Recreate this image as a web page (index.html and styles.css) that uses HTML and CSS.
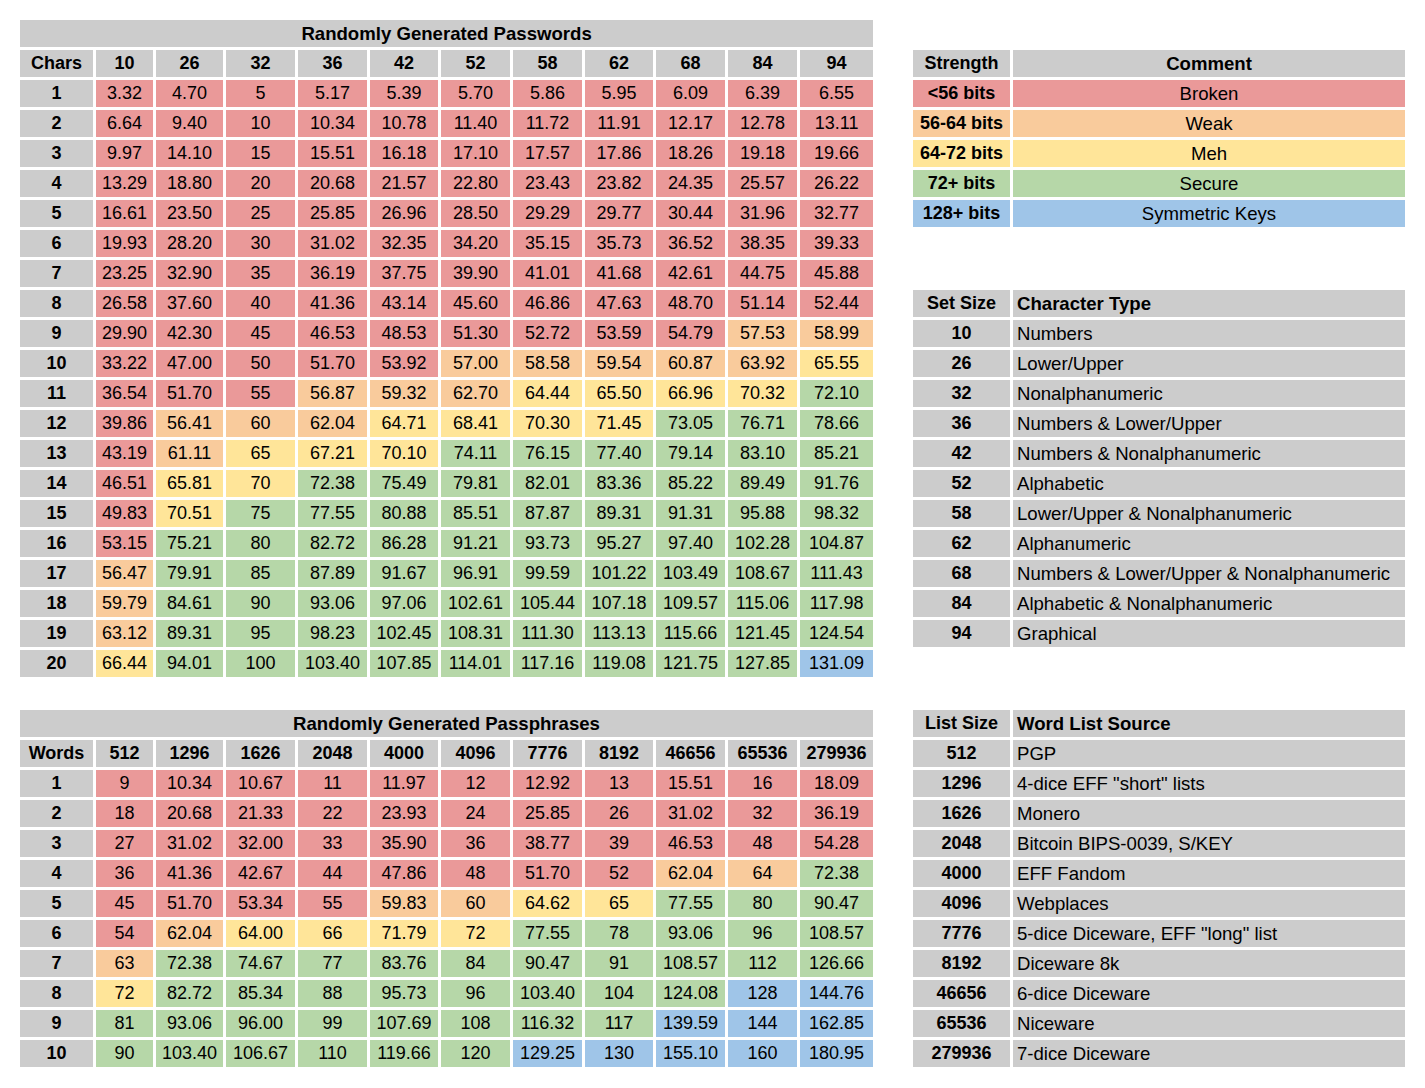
FILE: index.html
```html
<!DOCTYPE html>
<html lang="en">
<head>
<meta charset="utf-8">
<title>Password Entropy</title>
<link rel="stylesheet" href="styles.css">
</head>
<body>
<div class="page">
  <table class="sheet grid">
    <colgroup><col class="w73"><col class="w57"><col class="w67"><col class="w69"><col class="w69"><col class="w68"><col class="w69"><col class="w69"><col class="w68"><col class="w69"><col class="w69"><col class="w73"></colgroup>
    <tr><th class="title" colspan="12">Randomly Generated Passwords</th></tr>
    <tr><th>Chars</th><th>10</th><th>26</th><th>32</th><th>36</th><th>42</th><th>52</th><th>58</th><th>62</th><th>68</th><th>84</th><th>94</th></tr>
    <tr><th>1</th><td class="r">3.32</td><td class="r">4.70</td><td class="r">5</td><td class="r">5.17</td><td class="r">5.39</td><td class="r">5.70</td><td class="r">5.86</td><td class="r">5.95</td><td class="r">6.09</td><td class="r">6.39</td><td class="r">6.55</td></tr>
    <tr><th>2</th><td class="r">6.64</td><td class="r">9.40</td><td class="r">10</td><td class="r">10.34</td><td class="r">10.78</td><td class="r">11.40</td><td class="r">11.72</td><td class="r">11.91</td><td class="r">12.17</td><td class="r">12.78</td><td class="r">13.11</td></tr>
    <tr><th>3</th><td class="r">9.97</td><td class="r">14.10</td><td class="r">15</td><td class="r">15.51</td><td class="r">16.18</td><td class="r">17.10</td><td class="r">17.57</td><td class="r">17.86</td><td class="r">18.26</td><td class="r">19.18</td><td class="r">19.66</td></tr>
    <tr><th>4</th><td class="r">13.29</td><td class="r">18.80</td><td class="r">20</td><td class="r">20.68</td><td class="r">21.57</td><td class="r">22.80</td><td class="r">23.43</td><td class="r">23.82</td><td class="r">24.35</td><td class="r">25.57</td><td class="r">26.22</td></tr>
    <tr><th>5</th><td class="r">16.61</td><td class="r">23.50</td><td class="r">25</td><td class="r">25.85</td><td class="r">26.96</td><td class="r">28.50</td><td class="r">29.29</td><td class="r">29.77</td><td class="r">30.44</td><td class="r">31.96</td><td class="r">32.77</td></tr>
    <tr><th>6</th><td class="r">19.93</td><td class="r">28.20</td><td class="r">30</td><td class="r">31.02</td><td class="r">32.35</td><td class="r">34.20</td><td class="r">35.15</td><td class="r">35.73</td><td class="r">36.52</td><td class="r">38.35</td><td class="r">39.33</td></tr>
    <tr><th>7</th><td class="r">23.25</td><td class="r">32.90</td><td class="r">35</td><td class="r">36.19</td><td class="r">37.75</td><td class="r">39.90</td><td class="r">41.01</td><td class="r">41.68</td><td class="r">42.61</td><td class="r">44.75</td><td class="r">45.88</td></tr>
    <tr><th>8</th><td class="r">26.58</td><td class="r">37.60</td><td class="r">40</td><td class="r">41.36</td><td class="r">43.14</td><td class="r">45.60</td><td class="r">46.86</td><td class="r">47.63</td><td class="r">48.70</td><td class="r">51.14</td><td class="r">52.44</td></tr>
    <tr><th>9</th><td class="r">29.90</td><td class="r">42.30</td><td class="r">45</td><td class="r">46.53</td><td class="r">48.53</td><td class="r">51.30</td><td class="r">52.72</td><td class="r">53.59</td><td class="r">54.79</td><td class="o">57.53</td><td class="o">58.99</td></tr>
    <tr><th>10</th><td class="r">33.22</td><td class="r">47.00</td><td class="r">50</td><td class="r">51.70</td><td class="r">53.92</td><td class="o">57.00</td><td class="o">58.58</td><td class="o">59.54</td><td class="o">60.87</td><td class="o">63.92</td><td class="y">65.55</td></tr>
    <tr><th>11</th><td class="r">36.54</td><td class="r">51.70</td><td class="r">55</td><td class="o">56.87</td><td class="o">59.32</td><td class="o">62.70</td><td class="y">64.44</td><td class="y">65.50</td><td class="y">66.96</td><td class="y">70.32</td><td class="g">72.10</td></tr>
    <tr><th>12</th><td class="r">39.86</td><td class="o">56.41</td><td class="o">60</td><td class="o">62.04</td><td class="y">64.71</td><td class="y">68.41</td><td class="y">70.30</td><td class="y">71.45</td><td class="g">73.05</td><td class="g">76.71</td><td class="g">78.66</td></tr>
    <tr><th>13</th><td class="r">43.19</td><td class="o">61.11</td><td class="y">65</td><td class="y">67.21</td><td class="y">70.10</td><td class="g">74.11</td><td class="g">76.15</td><td class="g">77.40</td><td class="g">79.14</td><td class="g">83.10</td><td class="g">85.21</td></tr>
    <tr><th>14</th><td class="r">46.51</td><td class="y">65.81</td><td class="y">70</td><td class="g">72.38</td><td class="g">75.49</td><td class="g">79.81</td><td class="g">82.01</td><td class="g">83.36</td><td class="g">85.22</td><td class="g">89.49</td><td class="g">91.76</td></tr>
    <tr><th>15</th><td class="r">49.83</td><td class="y">70.51</td><td class="g">75</td><td class="g">77.55</td><td class="g">80.88</td><td class="g">85.51</td><td class="g">87.87</td><td class="g">89.31</td><td class="g">91.31</td><td class="g">95.88</td><td class="g">98.32</td></tr>
    <tr><th>16</th><td class="r">53.15</td><td class="g">75.21</td><td class="g">80</td><td class="g">82.72</td><td class="g">86.28</td><td class="g">91.21</td><td class="g">93.73</td><td class="g">95.27</td><td class="g">97.40</td><td class="g">102.28</td><td class="g">104.87</td></tr>
    <tr><th>17</th><td class="o">56.47</td><td class="g">79.91</td><td class="g">85</td><td class="g">87.89</td><td class="g">91.67</td><td class="g">96.91</td><td class="g">99.59</td><td class="g">101.22</td><td class="g">103.49</td><td class="g">108.67</td><td class="g">111.43</td></tr>
    <tr><th>18</th><td class="o">59.79</td><td class="g">84.61</td><td class="g">90</td><td class="g">93.06</td><td class="g">97.06</td><td class="g">102.61</td><td class="g">105.44</td><td class="g">107.18</td><td class="g">109.57</td><td class="g">115.06</td><td class="g">117.98</td></tr>
    <tr><th>19</th><td class="o">63.12</td><td class="g">89.31</td><td class="g">95</td><td class="g">98.23</td><td class="g">102.45</td><td class="g">108.31</td><td class="g">111.30</td><td class="g">113.13</td><td class="g">115.66</td><td class="g">121.45</td><td class="g">124.54</td></tr>
    <tr><th>20</th><td class="y">66.44</td><td class="g">94.01</td><td class="g">100</td><td class="g">103.40</td><td class="g">107.85</td><td class="g">114.01</td><td class="g">117.16</td><td class="g">119.08</td><td class="g">121.75</td><td class="g">127.85</td><td class="b">131.09</td></tr>
  </table>

  <div class="side">
    <table class="sheet legend">
      <colgroup><col class="w97"><col class="w392"></colgroup>
      <tr><th>Strength</th><th class="word">Comment</th></tr>
      <tr><th class="r">&lt;56 bits</th><td class="r">Broken</td></tr>
      <tr><th class="o">56-64 bits</th><td class="o">Weak</td></tr>
      <tr><th class="y">64-72 bits</th><td class="y">Meh</td></tr>
      <tr><th class="g">72+ bits</th><td class="g">Secure</td></tr>
      <tr><th class="b">128+ bits</th><td class="b">Symmetric Keys</td></tr>
    </table>

    <table class="sheet key">
      <colgroup><col class="w97"><col class="w392"></colgroup>
      <tr><th>Set Size</th><th class="left">Character Type</th></tr>
      <tr><th>10</th><td>Numbers</td></tr>
      <tr><th>26</th><td>Lower/Upper</td></tr>
      <tr><th>32</th><td>Nonalphanumeric</td></tr>
      <tr><th>36</th><td>Numbers &amp; Lower/Upper</td></tr>
      <tr><th>42</th><td>Numbers &amp; Nonalphanumeric</td></tr>
      <tr><th>52</th><td>Alphabetic</td></tr>
      <tr><th>58</th><td>Lower/Upper &amp; Nonalphanumeric</td></tr>
      <tr><th>62</th><td>Alphanumeric</td></tr>
      <tr><th>68</th><td>Numbers &amp; Lower/Upper &amp; Nonalphanumeric</td></tr>
      <tr><th>84</th><td>Alphabetic &amp; Nonalphanumeric</td></tr>
      <tr><th>94</th><td>Graphical</td></tr>
    </table>
  </div>

  <table class="sheet grid">
    <colgroup><col class="w73"><col class="w57"><col class="w67"><col class="w69"><col class="w69"><col class="w68"><col class="w69"><col class="w69"><col class="w68"><col class="w69"><col class="w69"><col class="w73"></colgroup>
    <tr><th class="title" colspan="12">Randomly Generated Passphrases</th></tr>
    <tr><th>Words</th><th>512</th><th>1296</th><th>1626</th><th>2048</th><th>4000</th><th>4096</th><th>7776</th><th>8192</th><th>46656</th><th>65536</th><th>279936</th></tr>
    <tr><th>1</th><td class="r">9</td><td class="r">10.34</td><td class="r">10.67</td><td class="r">11</td><td class="r">11.97</td><td class="r">12</td><td class="r">12.92</td><td class="r">13</td><td class="r">15.51</td><td class="r">16</td><td class="r">18.09</td></tr>
    <tr><th>2</th><td class="r">18</td><td class="r">20.68</td><td class="r">21.33</td><td class="r">22</td><td class="r">23.93</td><td class="r">24</td><td class="r">25.85</td><td class="r">26</td><td class="r">31.02</td><td class="r">32</td><td class="r">36.19</td></tr>
    <tr><th>3</th><td class="r">27</td><td class="r">31.02</td><td class="r">32.00</td><td class="r">33</td><td class="r">35.90</td><td class="r">36</td><td class="r">38.77</td><td class="r">39</td><td class="r">46.53</td><td class="r">48</td><td class="r">54.28</td></tr>
    <tr><th>4</th><td class="r">36</td><td class="r">41.36</td><td class="r">42.67</td><td class="r">44</td><td class="r">47.86</td><td class="r">48</td><td class="r">51.70</td><td class="r">52</td><td class="o">62.04</td><td class="o">64</td><td class="g">72.38</td></tr>
    <tr><th>5</th><td class="r">45</td><td class="r">51.70</td><td class="r">53.34</td><td class="r">55</td><td class="o">59.83</td><td class="o">60</td><td class="y">64.62</td><td class="y">65</td><td class="g">77.55</td><td class="g">80</td><td class="g">90.47</td></tr>
    <tr><th>6</th><td class="r">54</td><td class="o">62.04</td><td class="y">64.00</td><td class="y">66</td><td class="y">71.79</td><td class="y">72</td><td class="g">77.55</td><td class="g">78</td><td class="g">93.06</td><td class="g">96</td><td class="g">108.57</td></tr>
    <tr><th>7</th><td class="o">63</td><td class="g">72.38</td><td class="g">74.67</td><td class="g">77</td><td class="g">83.76</td><td class="g">84</td><td class="g">90.47</td><td class="g">91</td><td class="g">108.57</td><td class="g">112</td><td class="g">126.66</td></tr>
    <tr><th>8</th><td class="y">72</td><td class="g">82.72</td><td class="g">85.34</td><td class="g">88</td><td class="g">95.73</td><td class="g">96</td><td class="g">103.40</td><td class="g">104</td><td class="g">124.08</td><td class="b">128</td><td class="b">144.76</td></tr>
    <tr><th>9</th><td class="g">81</td><td class="g">93.06</td><td class="g">96.00</td><td class="g">99</td><td class="g">107.69</td><td class="g">108</td><td class="g">116.32</td><td class="g">117</td><td class="b">139.59</td><td class="b">144</td><td class="b">162.85</td></tr>
    <tr><th>10</th><td class="g">90</td><td class="g">103.40</td><td class="g">106.67</td><td class="g">110</td><td class="g">119.66</td><td class="g">120</td><td class="b">129.25</td><td class="b">130</td><td class="b">155.10</td><td class="b">160</td><td class="b">180.95</td></tr>
  </table>

  <table class="sheet key">
    <colgroup><col class="w97"><col class="w392"></colgroup>
    <tr><th>List Size</th><th class="left">Word List Source</th></tr>
    <tr><th>512</th><td>PGP</td></tr>
    <tr><th>1296</th><td>4-dice EFF "short" lists</td></tr>
    <tr><th>1626</th><td>Monero</td></tr>
    <tr><th>2048</th><td>Bitcoin BIPS-0039, S/KEY</td></tr>
    <tr><th>4000</th><td>EFF Fandom</td></tr>
    <tr><th>4096</th><td>Webplaces</td></tr>
    <tr><th>7776</th><td>5-dice Diceware, EFF "long" list</td></tr>
    <tr><th>8192</th><td>Diceware 8k</td></tr>
    <tr><th>46656</th><td>6-dice Diceware</td></tr>
    <tr><th>65536</th><td>Niceware</td></tr>
    <tr><th>279936</th><td>7-dice Diceware</td></tr>
  </table>
</div>
</body>
</html>
```

FILE: styles.css
```css
html, body {
  margin: 0;
  padding: 0;
  background: #ffffff;
}

body {
  font-family: "Liberation Sans", Arial, sans-serif;
  font-size: 18px;
  color: #000000;
}

.page {
  display: grid;
  grid-template-columns: 853px 492px;
  column-gap: 40px;
  row-gap: 33px;
  align-items: start;
  padding: 20px 0 0 20px;
}

.side {
  display: flex;
  flex-direction: column;
  gap: 63px;
  padding-top: 30px;
}

.sheet {
  border-collapse: separate;
  border-spacing: 3px;
  table-layout: fixed;
  margin: -3px;
  width: calc(100% + 6px);
}

.sheet th,
.sheet td {
  height: 27px;
  padding: 0;
  line-height: 27px;
  text-align: center;
  white-space: nowrap;
  overflow: hidden;
  background: #cccccc;
}

.sheet th {
  font-weight: bold;
}

.sheet td {
  font-weight: normal;
}

/* word-heavy cells read slightly wider in the source sheet */
.sheet .title,
.legend td,
.legend .word,
.key td,
.key th.left {
  font-size: 18.6px;
}

.key td,
.key th.left {
  text-align: left;
  padding-left: 4px;
}

.w57 { width: 57px; }
.w67 { width: 67px; }
.w68 { width: 68px; }
.w69 { width: 69px; }
.w73 { width: 73px; }
.w97 { width: 97px; }
.w392 { width: 392px; }

.sheet .r { background: #ea9999; }
.sheet .o { background: #f9cb9c; }
.sheet .y { background: #ffe599; }
.sheet .g { background: #b6d7a8; }
.sheet .b { background: #9fc5e8; }
```
